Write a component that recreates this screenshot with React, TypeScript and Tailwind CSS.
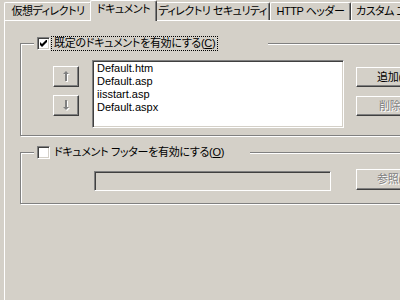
import React from 'react';

const face = "font-['Liberation_Sans','Noto_Sans_CJK_JP',sans-serif] [font-feature-settings:'palt']";

function Tab({ label, className, active }: { label: string; className: string; active?: boolean }) {
  if (active) {
    return (
      <div className={`relative z-10 -mx-[2px] -mb-px flex h-[21px] items-start justify-center rounded-t-[2px] border-l border-t border-r border-white border-r-[#404040] bg-[#d4d0c8] pt-[2px] tracking-[-0.5px] shadow-[inset_-1px_0_0_#808080] ${className}`}>
        {label}
      </div>
    );
  }
  return (
    <div className={`flex h-[18px] items-center justify-center rounded-t-[2px] border-l border-t border-r border-white border-r-[#404040] tracking-[-0.5px] shadow-[inset_-1px_0_0_#808080] ${className}`}>
      {label}
    </div>
  );
}

function CheckBox({ checked }: { checked?: boolean }) {
  return (
    <div className="flex h-[13px] w-[13px] shrink-0 items-center justify-center border border-b-white border-l-[#808080] border-r-white border-t-[#808080] bg-white shadow-[inset_1px_1px_0_#404040,inset_-1px_-1px_0_#d4d0c8]">
      {checked && (
        <svg width="7" height="7" viewBox="0 0 7 7">
          <path d="M0 2 L2 4 L7 -1 L7 2 L2 7 L0 5 Z" fill="#000" />
        </svg>
      )}
    </div>
  );
}

function Arrow({ down }: { down?: boolean }) {
  const d = down
    ? 'M3 0 H5 V7 H7 L4 10 L1 7 H3 Z'
    : 'M4 0 L7 3 H5 V10 H3 V3 H1 Z';
  return (
    <svg width="9" height="12" viewBox="0 0 9 12">
      <path d={d} fill="#fff" transform="translate(1 1)" />
      <path d={d} fill="#808080" />
    </svg>
  );
}

function Button({ children, disabled, className }: { children: React.ReactNode; disabled?: boolean; className: string }) {
  return (
    <div className={`flex items-center border border-b-[#404040] border-l-white border-r-[#404040] border-t-white shadow-[inset_-1px_-1px_0_#808080] ${disabled ? 'text-[#808080] [text-shadow:1px_1px_0_#fff]' : 'text-black'} ${className}`}>
      {children}
    </div>
  );
}

export default function App() {
  return (
    <div className={`h-[300px] w-[400px] overflow-hidden bg-[#d4d0c8] text-[11px] leading-[13px] tracking-[-0.3px] text-black ${face}`}>
      {/* tabs */}
      <div className="flex h-[20px] items-end pl-[4px] whitespace-nowrap">
        <Tab label="仮想ディレクトリ" className="w-[88px] shrink-0" />
        <Tab label="ドキュメント" className="w-[67px] shrink-0" active />
        <Tab label="ディレクトリ セキュリティ" className="w-[115px] shrink-0" />
        <Tab label="HTTP ヘッダー" className="w-[81px] shrink-0" />
        <Tab label="カスタム エラー" className="w-[80px] shrink-0" />
      </div>

      {/* panel */}
      <div className="ml-[4px] h-[290px] border-l border-t border-white pt-[22px]">
        {/* default document group */}
        <div className="relative ml-[15px] h-[93px] w-[420px] border border-[#808080] shadow-[inset_1px_1px_0_#fff,1px_1px_0_#fff]">
          <div className="absolute -top-[8px] left-[13px] flex h-[15px] w-[234px] items-center bg-[#d4d0c8] pl-[3px]">
            <CheckBox checked />
            <span className="ml-[1px] whitespace-nowrap border border-dotted border-black px-[2px] leading-[13px]">
              既定のドキュメントを有効にする(<u>C</u>)
            </span>
          </div>
          <div className="flex items-start">
            <div className="ml-[32px] mt-[22px] flex flex-col gap-[8px]">
              <Button className="h-[21px] w-[26px] justify-center">
                <Arrow />
              </Button>
              <Button className="h-[21px] w-[26px] justify-center">
                <Arrow down />
              </Button>
            </div>
            <div className="ml-[13px] mt-[16px] h-[68px] w-[252px] border border-b-white border-l-[#808080] border-r-white border-t-[#808080] bg-white pl-[4px] pt-[1px] tracking-normal shadow-[inset_1px_1px_0_#404040,inset_-1px_-1px_0_#d4d0c8]">
              <div className="leading-[13px]">Default.htm</div>
              <div className="leading-[13px]">Default.asp</div>
              <div className="leading-[13px]">iisstart.asp</div>
              <div className="leading-[13px]">Default.aspx</div>
            </div>
            <div className="ml-[12px] mt-[23px] flex flex-col gap-[9px]">
              <Button className="h-[20px] w-[75px] pl-[20px] whitespace-nowrap">追加(<u>D</u>)...</Button>
              <Button className="h-[20px] w-[75px] pl-[22px] whitespace-nowrap" disabled>削除(<u>M</u>)</Button>
            </div>
          </div>
        </div>

        {/* footer group */}
        <div className="relative ml-[15px] mt-[16px] h-[52px] w-[420px] border border-[#808080] shadow-[inset_1px_1px_0_#fff,1px_1px_0_#fff]">
          <div className="absolute -top-[8px] left-[13px] flex h-[15px] w-[216px] items-center bg-[#d4d0c8] pl-[3px]">
            <CheckBox />
            <span className="ml-[1px] whitespace-nowrap border border-transparent px-[2px] leading-[13px]">
              ドキュメント フッターを有効にする(<u>O</u>)
            </span>
          </div>
          <div className="flex items-start">
            <div className="ml-[73px] mt-[18px] h-[20px] w-[237px] border border-b-white border-l-[#808080] border-r-white border-t-[#808080] bg-[#d4d0c8] shadow-[inset_1px_1px_0_#404040,inset_-1px_-1px_0_#d4d0c8]" />
            <Button className="ml-[25px] mt-[16px] h-[21px] w-[75px] pl-[20px] whitespace-nowrap" disabled>参照(<u>B</u>)...</Button>
          </div>
        </div>
      </div>
    </div>
  );
}
